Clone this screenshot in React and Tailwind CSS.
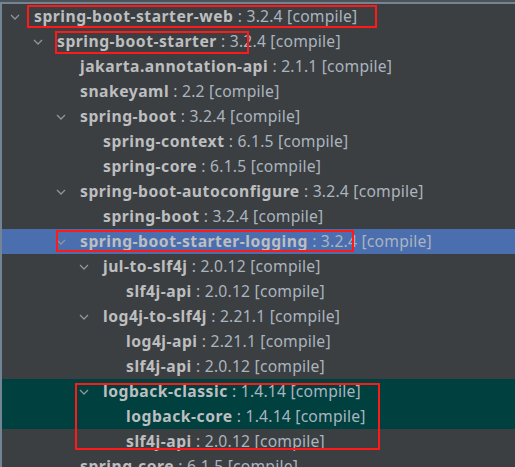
import React from 'react';

const rows = [
  { level: 0, name: 'spring-boot-starter-web', ver: '3.2.4', open: true },
  { level: 1, name: 'spring-boot-starter', ver: '3.2.4', open: true },
  { level: 2, name: 'jakarta.annotation-api', ver: '2.1.1' },
  { level: 2, name: 'snakeyaml', ver: '2.2' },
  { level: 2, name: 'spring-boot', ver: '3.2.4', open: true },
  { level: 3, name: 'spring-context', ver: '6.1.5' },
  { level: 3, name: 'spring-core', ver: '6.1.5' },
  { level: 2, name: 'spring-boot-autoconfigure', ver: '3.2.4', open: true },
  { level: 3, name: 'spring-boot', ver: '3.2.4' },
  { level: 2, name: 'spring-boot-starter-logging', ver: '3.2.4', open: true, tone: 'selected' },
  { level: 3, name: 'jul-to-slf4j', ver: '2.0.12', open: true },
  { level: 4, name: 'slf4j-api', ver: '2.0.12' },
  { level: 3, name: 'log4j-to-slf4j', ver: '2.21.1', open: true },
  { level: 4, name: 'log4j-api', ver: '2.21.1' },
  { level: 4, name: 'slf4j-api', ver: '2.0.12' },
  { level: 3, name: 'logback-classic', ver: '1.4.14', open: true, tone: 'found' },
  { level: 4, name: 'logback-core', ver: '1.4.14', tone: 'found' },
  { level: 4, name: 'slf4j-api', ver: '2.0.12' },
  { level: 2, name: 'spring-core', ver: '6.1.5' },
];

// indent per nesting level, in px (the 2px left strip comes first)
const indent = ['pl-[8px]', 'pl-[31px]', 'pl-[54px]', 'pl-[77px]', 'pl-[100px]'];

const Chevron = () => (
  <svg width="10" height="6" viewBox="0 0 10 6" className="shrink-0">
    <path d="M1 1 L5 5 L9 1" fill="none" stroke="#8f959a" strokeWidth="1.3" />
  </svg>
);

const Row = ({ row }) => {
  const bg =
    row.tone === 'selected' ? 'bg-[#4b6eaf]' : row.tone === 'found' ? 'bg-[#00403f]' : '';
  return (
    <div className={`flex h-[25px] items-center whitespace-nowrap ${bg} ${indent[row.level]}`}>
      <div className="flex w-[24px] shrink-0 items-center">{row.open && <Chevron />}</div>
      <span className="font-bold tracking-[0.5px] text-[#bcbec0]">{row.name}</span>
      <span className="tracking-[0.2px] text-[#aab4bf]">&nbsp;: {row.ver} [compile]</span>
    </div>
  );
};

export default function App() {
  return (
    <div
      className="relative h-[467px] w-[515px] overflow-hidden bg-[#3c3f41] text-[15.7px]"
      style={{ fontFamily: '"Noto Sans", "Open Sans", sans-serif' }}
    >
      <div className="h-[2px] bg-[#4d5257]" />
      <div className="h-[2px] bg-[#738594]" />
      <div className="flex">
        <div className="w-[2px] shrink-0 bg-[#738594]" />
        <div className="flex-1">
          {rows.map((r, i) => (
            <Row key={i} row={r} />
          ))}
        </div>
      </div>

      {/* red annotation boxes */}
      <div className="absolute left-[27px] top-[5px] h-[23px] w-[350px] border-2 border-[#ff1a1a]" />
      <div className="absolute left-[55px] top-[31px] h-[23px] w-[194px] border-2 border-[#ff1a1a]" />
      <div className="absolute left-[56px] top-[230px] h-[22px] w-[298px] border-2 border-[#ff1a1a]" />
      <div className="absolute left-[75px] top-[383px] h-[67px] w-[305px] border-2 border-[#ff1a1a]" />
    </div>
  );
}
